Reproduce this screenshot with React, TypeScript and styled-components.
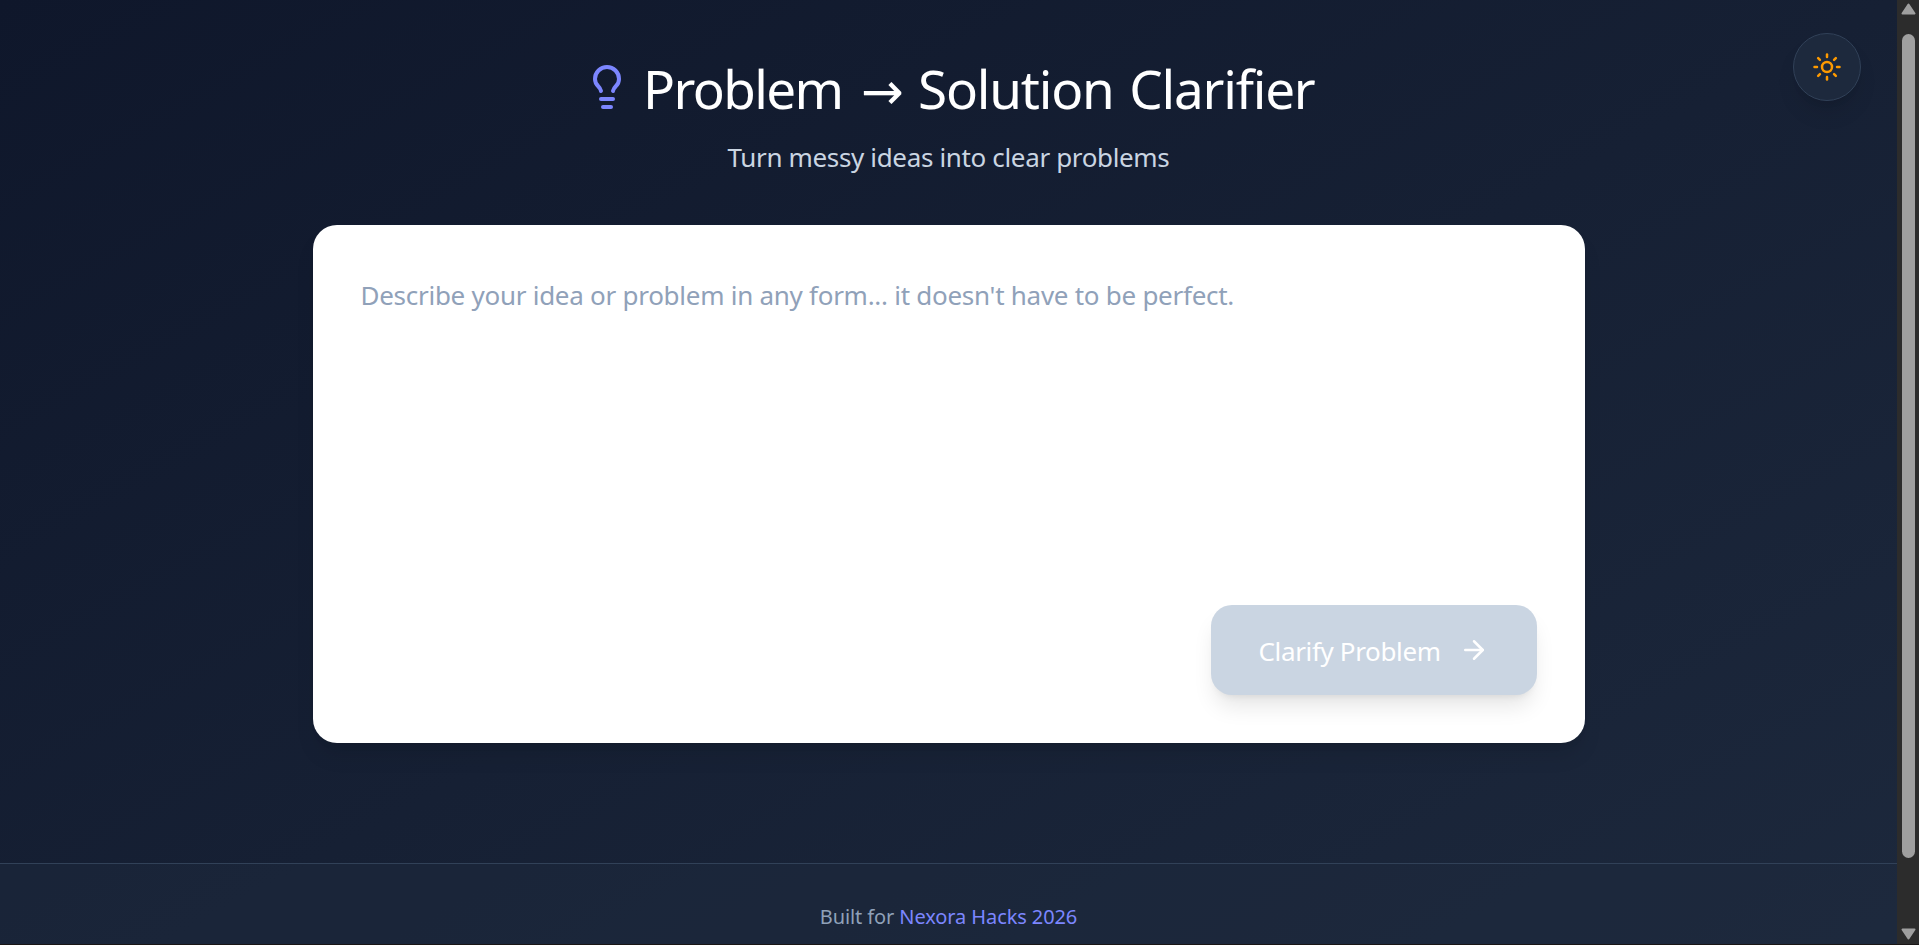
import styled, { createGlobalStyle } from "styled-components";
import { ArrowRight, Lightbulb, Sun } from "lucide-react";

const GlobalStyle = createGlobalStyle`
	* {
		box-sizing: border-box;
	}

	body {
		margin: 0;
		overflow: hidden;
		font-family: "Noto Sans", "Open Sans", sans-serif;
	}
`;

const Screen = styled.div`
	display: flex;
	height: 945px;
	overflow: hidden;
	background-color: #1a1616;
`;

const Page = styled.div`
	position: relative;
	display: flex;
	flex-direction: column;
	flex: 1 1 auto;
	height: 944px;
	overflow: hidden;
	background: linear-gradient(to bottom right, #0f172b, #1d293d) 0 0 / 100% 1033px;
`;

const ThemeToggle = styled.button`
	position: absolute;
	top: 33px;
	right: 36px;
	display: flex;
	align-items: center;
	justify-content: center;
	width: 68px;
	height: 68px;
	padding: 0;
	border: 1px solid #314158;
	border-radius: 50%;
	background-color: #1d293d;
	color: #fe9a00;
	box-shadow: 0 15px 22px -4px rgba(0, 0, 0, 0.1), 0 6px 9px -6px rgba(0, 0, 0, 0.1);
`;

const Main = styled.main`
	display: flex;
	flex-direction: column;
	align-items: center;
	width: 1272px;
	height: 863px;
	margin: 0 auto;
	flex-shrink: 0;
`;

const Header = styled.header`
	display: flex;
	flex-direction: column;
	align-items: center;
	height: 225px;
	padding-top: 53px;
`;

const Title = styled.h1`
	display: flex;
	align-items: center;
	height: 72px;
	margin: 0;
	color: #fff;
	font-size: 53px;
	font-weight: 400;
	line-height: 72px;
	white-space: nowrap;

	svg {
		margin: -4px 12px 0 0;
		color: #7c86ff;
	}
`;

const Word = styled.span<{ $width: number; $spacing: number }>`
	width: ${({ $width }) => $width}px;
	letter-spacing: ${({ $spacing }) => $spacing}px;
	word-spacing: 3px;
`;

const Arrow = styled(Word)`
	padding: 5px 0 0 1px;
	font-family: "DejaVu Sans", sans-serif;
	font-size: 51px;
`;

const Subtitle = styled.p`
	margin: 11px 0 0;
	color: #cad5e2;
	font-size: 26px;
	line-height: 42px;
	letter-spacing: -0.35px;
	white-space: nowrap;
`;

const Card = styled.section`
	display: flex;
	flex-direction: column;
	width: 100%;
	height: 518px;
	padding: 48px;
	border-radius: 24px;
	background-color: #fff;
	box-shadow: 0 15px 22px -4px rgba(0, 0, 0, 0.1), 0 6px 9px -6px rgba(0, 0, 0, 0.1);
`;

const IdeaInput = styled.textarea`
	flex: 1 1 auto;
	padding: 0;
	border: none;
	outline: none;
	resize: none;
	background-color: transparent;
	font-family: inherit;
	font-size: 26px;
	line-height: 44px;
	letter-spacing: -0.27px;

	&::placeholder {
		color: #90a1b9;
		opacity: 1;
	}
`;

const ClarifyButton = styled.button`
	display: flex;
	align-items: center;
	justify-content: space-between;
	align-self: flex-end;
	width: 326px;
	height: 90px;
	padding: 0 48px;
	border: none;
	border-radius: 21px;
	background-color: #cad5e2;
	color: #fff;
	font-family: inherit;
	font-size: 26px;
	letter-spacing: -0.35px;
	white-space: nowrap;
	box-shadow: 0 15px 22px -4px rgba(0, 0, 0, 0.1), 0 6px 9px -6px rgba(0, 0, 0, 0.1);

	span {
		padding-top: 2px;
	}
`;

const Footer = styled.footer`
	flex: 1 0 auto;
	padding-top: 38px;
	border-top: 1px solid #314158;
	background-color: rgba(29, 41, 61, 0.5);
	color: #90a1b9;
	font-size: 20px;
	line-height: 30px;
	letter-spacing: -0.1px;
	text-align: center;

	span {
		color: #7c86ff;
	}
`;

const Scrollbar = styled.div`
	display: flex;
	flex-direction: column;
	align-items: center;
	justify-content: space-between;
	flex: 0 0 22px;
	height: 944px;
	padding: 3px 0 4px;
	background-color: #2c2c2c;
`;

const Thumb = styled.div`
	width: 13px;
	height: 824px;
	margin: 19px 0 auto;
	border-radius: 7px;
	background-color: #9f9f9f;
`;

const Triangle = styled.svg<{ $down?: boolean }>`
	display: block;
	transform: ${({ $down }) => ($down ? "rotate(180deg)" : "none")};
`;

const ScrollArrow = ({ down }: { down?: boolean }): JSX.Element => (
	<Triangle $down={down} width="15" height="12" viewBox="0 0 15 12">
		<path
			d="M7.5 1.5 L13.5 10.5 H1.5 Z"
			fill="#9f9f9f"
			stroke="#9f9f9f"
			strokeWidth="2"
			strokeLinejoin="round"
		/>
	</Triangle>
);

const App = (): JSX.Element => {
	return (
		<Screen>
			<GlobalStyle />
			<Page>
				<ThemeToggle type="button" aria-label="Toggle theme">
					<Sun size={30} />
				</ThemeToggle>
				<Main>
					<Header>
						<Title>
							<Lightbulb size={48} />
							<Word $width={217} $spacing={-1.6}>
								Problem
							</Word>
							<Arrow $width={58} $spacing={0}>
								→
							</Arrow>
							<Word $width={396} $spacing={-1.2}>
								Solution Clarifier
							</Word>
						</Title>
						<Subtitle>Turn messy ideas into clear problems</Subtitle>
					</Header>
					<Card>
						<IdeaInput placeholder="Describe your idea or problem in any form... it doesn't have to be perfect." />
						<ClarifyButton type="button">
							<span>Clarify Problem</span>
							<ArrowRight size={30} />
						</ClarifyButton>
					</Card>
				</Main>
				<Footer>
					Built for <span>Nexora Hacks 2026</span>
				</Footer>
			</Page>
			<Scrollbar>
				<ScrollArrow />
				<Thumb />
				<ScrollArrow down />
			</Scrollbar>
		</Screen>
	);
};

export default App;
